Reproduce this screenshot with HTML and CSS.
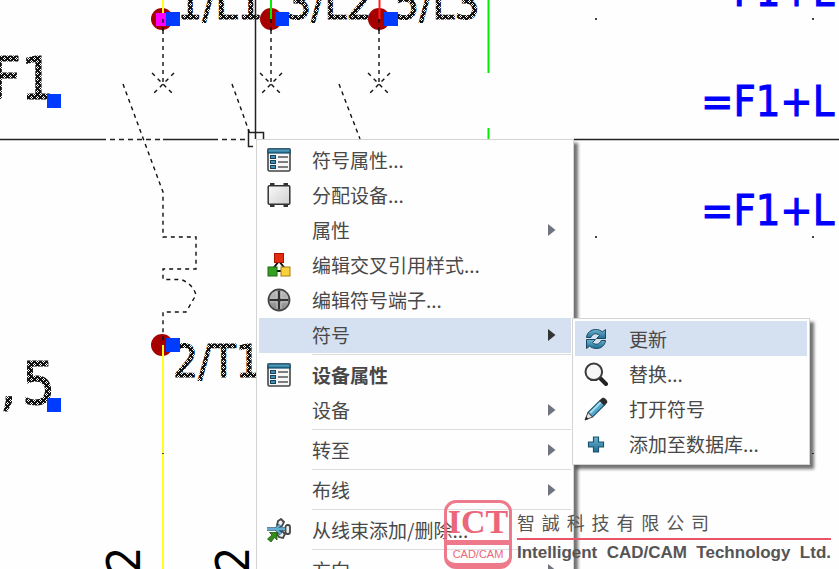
FILE: index.html
```
<!DOCTYPE html>
<html lang="zh-CN">
<head>
<meta charset="utf-8">
<title>符号</title>
<link rel="stylesheet" href="styles.css">
</head>
<body>
<svg class="defs" aria-hidden="true">
  <defs>
    <linearGradient id="teal" x1="0" y1="0" x2="0" y2="1"><stop offset="0" stop-color="#6fb4d3"/><stop offset="1" stop-color="#1d6c92"/></linearGradient>
    <linearGradient id="grey" x1="0" y1="0" x2="1" y2="1"><stop offset="0" stop-color="#fafafa"/><stop offset="1" stop-color="#cfcfcf"/></linearGradient>
    <linearGradient id="steel" x1="0" y1="0" x2="0" y2="1"><stop offset="0" stop-color="#c4c4c4"/><stop offset="1" stop-color="#858585"/></linearGradient>
    <symbol id="i-props" viewBox="0 0 24 24">
      <rect x="1" y="1" width="22" height="22" rx="1.5" fill="#f6f6f6" stroke="#444" stroke-width="1.6"/>
      <rect x="1" y="1" width="22" height="4" fill="url(#teal)" stroke="#164f6c" stroke-width="1.2"/>
      <g fill="#3f8db3" stroke="#17435c"><rect x="3.500" y="7.500" width="5" height="3"/><rect x="3.500" y="12.500" width="5" height="3"/><rect x="3.500" y="17.500" width="5" height="3"/></g>
      <path d="M11 9h10M11 14h10M11 19h10" stroke="#555" stroke-width="1.5"/>
    </symbol>
    <symbol id="i-device" viewBox="0 0 24 24">
      <path d="M3 0h4.500v4H3zM16.500 0H21v4h-4.500zM3 20h4.500v4H3zM16.500 20H21v4h-4.500z" fill="#333"/>
      <rect x="1.200" y="2.700" width="21.600" height="18.600" rx="1" fill="url(#grey)" stroke="#333" stroke-width="1.500"/>
    </symbol>
    <symbol id="i-tree" viewBox="0 0 24 24">
      <path d="M12 8L5 17M12 8l7 9M6 18h12" stroke="#111" stroke-width="2"/>
      <rect x="7.500" y="0.500" width="9" height="9" fill="#e42a10" stroke="#a81500"/>
      <rect x="1" y="14" width="9" height="9" fill="#35a01f" stroke="#1d6810"/>
      <rect x="14" y="14" width="9" height="9" fill="#f8d13a" stroke="#a77a10"/>
    </symbol>
    <symbol id="i-terminal" viewBox="0 0 24 24">
      <circle cx="12" cy="12" r="10.600" fill="url(#steel)" stroke="#444" stroke-width="1.600"/>
      <path d="M12 3v18M3 12h18" stroke="#ddd" stroke-width="4.600"/><path d="M12 2.500v19M2.500 12h19" stroke="#333" stroke-width="2.600"/>
    </symbol>
    <symbol id="i-harness" viewBox="0 0 24 24">
      <g fill="#eee" stroke="#444" stroke-width="1.800"><path d="M10 7l1-4 3-2 3 3-2 4-4 1z"/><path d="M11 14l4-1 3 3-2 4-4-1-2-3z"/><rect x="18.500" y="7" width="4.500" height="9" rx="2"/></g>
      <path d="M0 11h12M9 11l4-4M9 11l5 5M12 11h7" stroke="#355f75" stroke-width="3.600" fill="none"/>
      <path d="M0 11h12M9 11l4-4M9 11l5 5M12 11h6" stroke="#63add0" stroke-width="1.800" fill="none"/>
      <path d="M2.500 14.500H10V22l-2.500-2.500L4 24l-3.500-3L5 17z" fill="#348a1b" stroke="#1e5b0c" stroke-width=".8"/>
    </symbol>
    <symbol id="i-refresh" viewBox="0 0 24 24">
      <g fill="url(#teal)" stroke="#17485f" stroke-width="1" stroke-linejoin="round">
        <path d="M2.500 10.500C3 5.500 7 2.500 11.500 2.500c3 0 5 .8 6.800 2.400L21.500 2.500v9h-9l3-3C12.500 5.500 8.500 6.500 6.800 10.500z"/>
        <path d="M21.500 13.500c-.5 5-4.500 8-9 8-3 0-5-.8-6.800-2.400L2.500 21.500v-9h9l-3 3c3 3 7 2 8.700-2z"/>
      </g>
    </symbol>
    <symbol id="i-search" viewBox="0 0 24 24">
      <path d="M16 16l6 6" stroke="#222" stroke-width="4" stroke-linecap="round"/>
      <circle cx="9.800" cy="9.800" r="8.300" fill="#f7f7f7" stroke="#3b3b3b" stroke-width="2"/>
    </symbol>
    <symbol id="i-pencil" viewBox="0 0 24 24">
      <path d="M4 15.500L16.500 3l4.500 4.500L8.500 20z" fill="#56a9ce" stroke="#23556e" stroke-width="1.200"/>
      <path d="M6 16L17.500 4.500" stroke="#a9dcf1" stroke-width="2"/>
      <path d="M1 23l3-7.500L8.500 20z" fill="#e6e6e6" stroke="#444"/><path d="M1 23l1.200-3.500L4.500 22z" fill="#222"/>
      <path d="M15.500 4L18 1c2-1.600 6.500 2.500 5 5l-3 2.500z" fill="#2b2b2b"/>
    </symbol>
    <symbol id="i-plus" viewBox="0 0 24 24">
      <path d="M9.500 5h5v5h5v5h-5v5h-5v-5h-5v-5h5z" fill="url(#teal)" stroke="#1a5471" stroke-width="1.200"/>
    </symbol>
    <symbol id="i-arrow" viewBox="0 0 8 12"><path d="M0 0l7.500 6L0 12z" fill="currentColor"/></symbol>
  </defs>
</svg>

<main class="workspace">
  <svg class="drawing" role="img" aria-label="F1">
    <defs>
      <pattern id="dither" width="6" height="6" patternUnits="userSpaceOnUse">
        <rect width="6" height="6" fill="#111"/><path d="M1 0h1v1H1zM0 1h1v1H0zM2 1h1v1H2zM1 2h1v1H1zM4 3h1v1H4zM3 4h1v1H3zM5 4h1v1H5zM4 5h1v1H4z" fill="#fff"/>
      </pattern>
      <g id="pin-cross"><path d="M0 11v54"/><path d="M-11 54L11 76M11 54L-11 76"/></g>
    </defs>

    <g class="label-blue">
      <text x="701" y="6">=F1+L</text><text x="701" y="116">=F1+L</text><text x="701" y="225">=F1+L</text>
    </g>
    <g class="label-dither">
      <text x="177" y="19">1/L1</text><text x="286" y="19">3/L2</text><text x="394" y="19">5/L3</text><text x="173" y="377">2/T1</text>
      <g class="large"><text x="-9" y="99">F1</text><text x="0 22" y="404">,5</text></g>
    </g>
    <g class="label-side">
      <text transform="translate(140 573) rotate(-90)">2</text><text transform="translate(249 573) rotate(-90)">2</text>
    </g>

    <g class="crosshair">
      <path d="M0 139.500H106M163 139.500H218M574 139.500H4000M255.500 0V139"/>
      <path class="dash" d="M110 139.500H163M222 139.500H248"/>
      <path d="M253 146.500H248.500V129M250 132.500H263.500V139"/>
    </g>

    <g class="wire"><path stroke="#00f000" d="M488.500 0V73M488.500 128V139"/><path stroke="#ffff20" d="M163 345V4000"/></g>
    <g fill="#a60000"><circle cx="162" cy="19" r="11"/><circle cx="271" cy="19" r="11"/><circle cx="379" cy="19" r="11"/><circle cx="162" cy="345" r="11"/></g>
    <rect x="156" y="13" width="11" height="13" fill="#f0f"/>
    <g fill="#003cff">
      <rect x="166" y="12" width="14" height="14"/><rect x="275" y="12" width="14" height="14"/><rect x="384" y="12" width="14" height="14"/>
      <rect x="166" y="338" width="14" height="14"/><rect x="47" y="94" width="14" height="14"/><rect x="47" y="398" width="14" height="14"/>
    </g>
    <g class="wire"><path stroke="#ffff20" d="M163 0V13M163 345V356"/><path stroke="#00f000" d="M271 0V19"/><path stroke="#ff2020" d="M379.500 0V19"/></g>

    <g class="dashed">
      <use href="#pin-cross" x="163" y="19"/><use href="#pin-cross" x="271" y="19"/><use href="#pin-cross" x="379" y="19"/>
      <path d="M163 19v12M271 19v12M379 19v12"/>
      <path d="M123 84L160 184L163 192V237H196V269H163V279.500H181Q193 284 196 295L186 312H163V344"/>
      <path d="M232 84L250 134M339 84L360 139"/>
    </g>
    <g fill="#444">
      <rect x="595" y="18" width="2" height="2"/><rect x="812" y="18" width="2" height="2"/><rect x="595" y="236" width="2" height="2"/>
      <rect x="812" y="236" width="2" height="2"/><rect x="162" y="453" width="2" height="1"/><rect x="812" y="453" width="2" height="1"/>
    </g>
  </svg>

  <ul class="menu context">
    <li><button><svg class="icon"><use href="#i-props"/></svg><span>符号属性...</span></button></li>
    <li><button><svg class="icon"><use href="#i-device"/></svg><span>分配设备...</span></button></li>
    <li><button><i></i><span>属性</span><svg class="arrow"><use href="#i-arrow"/></svg></button></li>
    <li><button><svg class="icon"><use href="#i-tree"/></svg><span>编辑交叉引用样式...</span></button></li>
    <li><button><svg class="icon"><use href="#i-terminal"/></svg><span>编辑符号端子...</span></button></li>
    <li class="parent"><button class="active"><i></i><span>符号</span><svg class="arrow"><use href="#i-arrow"/></svg></button>
      <ul class="menu submenu">
        <li><button class="active"><svg class="icon"><use href="#i-refresh"/></svg><span>更新</span></button></li>
        <li><button><svg class="icon"><use href="#i-search"/></svg><span>替换...</span></button></li>
        <li><button><svg class="icon"><use href="#i-pencil"/></svg><span>打开符号</span></button></li>
        <li><button><svg class="icon"><use href="#i-plus"/></svg><span>添加至数据库...</span></button></li>
      </ul>
    </li>
    <li class="group"><button class="default"><svg class="icon"><use href="#i-props"/></svg><span>设备属性</span></button></li>
    <li><button><i></i><span>设备</span><svg class="arrow"><use href="#i-arrow"/></svg></button></li>
    <li class="group"><button><i></i><span>转至</span><svg class="arrow"><use href="#i-arrow"/></svg></button></li>
    <li class="group"><button><i></i><span>布线</span><svg class="arrow"><use href="#i-arrow"/></svg></button></li>
    <li class="group"><button><svg class="icon"><use href="#i-harness"/></svg><span>从线束添加/删除...</span></button></li>
    <li class="group"><button><i></i><span>方向</span><svg class="arrow"><use href="#i-arrow"/></svg></button></li>
  </ul>

  <div class="brand">
    <div class="badge"><b>ICT</b><span>CAD/CAM</span></div>
    <div class="company"><p class="zh">智誠科技有限公司</p><p class="en">Intelligent CAD/CAM Technology Ltd.</p></div>
  </div>
</main>
</body>
</html>
```
FILE: styles.css
```
* { box-sizing: border-box; }
body { margin: 0; background: #fefefe; font-family: "Noto Sans CJK SC", sans-serif; }
.defs { position: absolute; width: 0; height: 0; }
.workspace { position: relative; height: 100vh; overflow: hidden; }

.drawing { display: block; width: 100%; height: 100%; font-family: "DejaVu Sans Condensed", "DejaVu Sans", sans-serif; font-size: 44px; }
.label-blue { fill: #00f; stroke: #00f; stroke-width: 1; font-size: 43px; }
.label-dither { fill: url(#dither); stroke: url(#dither); stroke-width: 1; }
.large { font-size: 58px; }
.label-side { fill: #000; font-size: 46px; }
.crosshair { fill: none; stroke: #222; stroke-width: 1.5; }
.crosshair .dash { stroke-dasharray: 5 4; }
.wire { fill: none; stroke-width: 2; }
.dashed { fill: none; stroke: #111; stroke-width: 1.4; stroke-dasharray: 4 4; }

.menu { position: absolute; margin: 0; padding: 3px 2px; list-style: none; background: #fefefe; border: 1px solid #d4d4d4; box-shadow: 4px 4px 3px rgba(0, 0, 0, .55); }
.context { left: 256px; top: 139px; width: 318px; }
.submenu { left: calc(100% + 1px); top: 0; width: 238px; padding: 2px 2px 3px; z-index: 1; }
.parent { position: relative; }
.menu button { display: grid; grid-template-columns: 24px 1fr 8px; column-gap: 21px; align-items: center; width: 100%; height: 35px; padding: 0 15px 1px 8px; border: 0; background: none; color: #484848; font: 19px/34px "Noto Sans CJK SC", sans-serif; text-align: left; white-space: nowrap; }
.menu button.active { background: #d5e0f1; }
.menu button.default { font-weight: 700; }
.menu .submenu button { padding: 0 15px 0 9px; line-height: 35px; }
.icon { width: 24px; height: 24px; }
.arrow { width: 8px; height: 12px; color: #6e7480; }
.active .arrow { color: #333; }
.group::before { content: ""; display: block; height: 1px; margin: 1px 0 3px 53px; background: #dcdcdc; }

.brand { position: absolute; right: 8px; bottom: 0; display: flex; gap: 5px; color: #555; }
.badge { display: flex; flex-direction: column; width: 68px; height: 69px; border: 3px solid #ec6b7e; border-bottom-width: 6px; border-radius: 12px; color: #ea566d; text-align: center; opacity: .9; }
.badge b { font: 700 34px/37px "Liberation Serif", serif; }
.badge span { flex: 1; border-top: 5px solid #ec6b7e; font: 11px/18px "Liberation Sans", sans-serif; }
.company { width: 314px; padding-top: 10px; }
.company p { margin: 0; }
.zh { width: 192px; font: 18px/24px "Noto Sans CJK TC", sans-serif; text-align-last: justify; }
.company .en { margin-top: 4px; border-top: 2px solid #ea5468; font: 700 17px/25px "Liberation Sans", sans-serif; white-space: nowrap; text-align-last: justify; }
```
